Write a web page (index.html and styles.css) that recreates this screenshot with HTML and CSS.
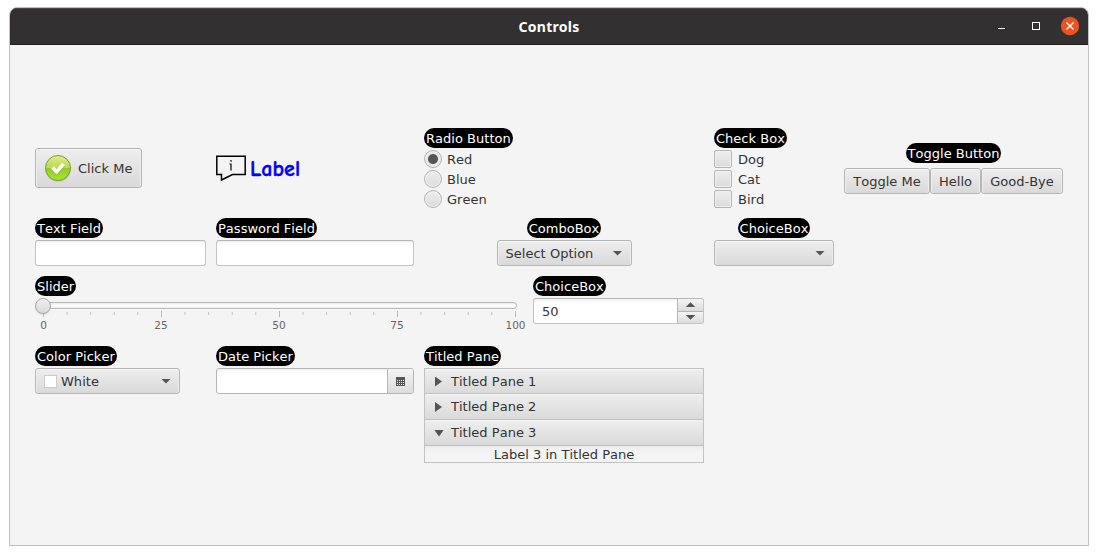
FILE: index.html
```html
<!DOCTYPE html>
<html lang="en">
<head>
<meta charset="utf-8">
<title>Controls</title>
<link rel="stylesheet" href="styles.css">
</head>
<body>
<div class="window">
  <header class="titlebar">
    <h1 class="title">Controls</h1>
    <svg class="window-buttons" width="84" height="20" viewBox="0 0 84 20">
      <path d="M-2 11.500h7" stroke="#fff"/>
      <rect x="32.500" y="5.500" width="7" height="7" fill="none" stroke="#fff"/>
      <circle cx="70" cy="9" r="9.200" fill="#e95420"/>
      <path d="M66.500 5.500l7 7M73.500 5.500l-7 7" stroke="#fff" stroke-width="1.400"/>
    </svg>
  </header>
  <main class="grid">
    <div class="cell middle">
      <button class="btn icon-btn">
        <svg width="28" height="28" viewBox="0 0 28 28">
          <defs>
            <linearGradient id="green" x1="0" y1="0" x2="0" y2="1">
              <stop offset="0" stop-color="#e4ec90"/><stop offset=".48" stop-color="#b9dc50"/>
              <stop offset=".52" stop-color="#97c92f"/><stop offset="1" stop-color="#a6e82c"/>
            </linearGradient>
          </defs>
          <ellipse cx="14" cy="15.500" rx="12.500" ry="12.300" fill="#000" opacity=".13"/>
          <circle cx="14" cy="14" r="12.500" fill="url(#green)" stroke="#76a02c"/>
          <path d="M8.500 13.500l4 4.200 7-7.700" fill="none" stroke="#5f8c1d" stroke-width="3.800" opacity=".35" transform="translate(0 1)"/>
          <path d="M8.500 13.500l4 4.200 7-7.700" fill="none" stroke="#fff" stroke-width="3.700"/>
        </svg>
        <span>Click Me</span>
      </button>
    </div>
    <div class="cell middle">
      <div class="info-label">
        <svg width="31" height="27" viewBox="0 0 31 27" fill="none" stroke="#000">
          <path d="M.8 1.200H29.200V19.500H16.500L5.500 25V19.500H.8Z" stroke-width="1.500"/>
          <path d="M13.500 9h1.500V15.500M15 5v1.800" stroke-width="1.200"/>
        </svg>
        <span class="comic">Label</span>
      </div>
    </div>
    <div class="cell">
      <span class="tag">Radio Button</span>
      <label class="option"><i class="radio selected"></i><span>Red</span></label>
      <label class="option"><i class="radio"></i><span>Blue</span></label>
      <label class="option"><i class="radio"></i><span>Green</span></label>
    </div>
    <div class="cell">
      <span class="tag">Check Box</span>
      <label class="option"><i class="check"></i><span>Dog</span></label>
      <label class="option"><i class="check"></i><span>Cat</span></label>
      <label class="option"><i class="check"></i><span>Bird</span></label>
    </div>
    <div class="cell middle center toggle-cell">
      <span class="tag">Toggle Button</span>
      <div class="toggles">
        <button class="btn toggle-me">Toggle Me</button><button class="btn hello">Hello</button><button class="btn good-bye">Good-Bye</button>
      </div>
    </div>

    <div class="cell"><span class="tag">Text Field</span><div class="field"></div></div>
    <div class="cell"><span class="tag">Password Field</span><div class="field"></div></div>
    <div class="cell center">
      <span class="tag">ComboBox</span>
      <div class="btn dropdown combo"><span>Select Option</span><i class="down"></i></div>
    </div>
    <div class="cell center">
      <span class="tag">ChoiceBox</span>
      <div class="btn dropdown choice"><span></span><i class="down"></i></div>
    </div>

    <div class="cell slider-row">
      <div class="cell">
        <span class="tag">Slider</span>
        <svg class="slider" width="488" height="38" viewBox="0 0 488 38">
          <defs>
            <linearGradient id="track" x1="0" y1="0" x2="0" y2="1"><stop offset="0" stop-color="#e6e6e6"/><stop offset=".5" stop-color="#fff"/><stop offset="1" stop-color="#eee"/></linearGradient>
            <linearGradient id="thumb" x1="0" y1="0" x2="0" y2="1"><stop offset="0" stop-color="#efefef"/><stop offset="1" stop-color="#d9d9d9"/></linearGradient>
          </defs>
          <rect x="1.500" y="4.500" width="480" height="6" rx="3" fill="url(#track)" stroke="#b7b7b7"/>
          <path d="M4 11.500h476" stroke="#fff" opacity=".7"/>
          <path d="M8.500 13v6M126.500 13v6M244.500 13v6M362.500 13v6M480.500 13v6" stroke="#b8b8b8"/>
          <path d="M32 14v3M55.600 14v3M79.200 14v3M102.800 14v3M150 14v3M173.600 14v3M197.200 14v3M220.800 14v3M268 14v3M291.600 14v3M315.200 14v3M338.800 14v3M386 14v3M409.600 14v3M433.200 14v3M456.800 14v3" stroke="#c4c4c4"/>
          <circle cx="8" cy="9" r="8" fill="#000" opacity=".08"/>
          <circle cx="8" cy="8" r="7.500" fill="url(#thumb)" stroke="#a9a9a9"/>
          <g class="tick-text"><text x="8.500" y="31">0</text><text x="126" y="31">25</text><text x="244" y="31">50</text><text x="362" y="31">75</text><text x="480.500" y="31">100</text></g>
        </svg>
      </div>
      <div class="cell">
        <span class="tag">ChoiceBox</span>
        <div class="field spinner">
          <span class="value">50</span>
          <span class="arrows"><span class="arrow"><i class="up"></i></span><span class="arrow"><i class="down"></i></span></span>
        </div>
      </div>
    </div>

    <div class="cell first-column">
      <span class="tag">Color Picker</span>
      <div class="btn dropdown color"><i class="swatch"></i><span>White</span><i class="down"></i></div>
    </div>
    <div class="cell">
      <span class="tag">Date Picker</span>
      <div class="field date">
        <span class="calendar">
          <svg width="9" height="9" viewBox="0 0 9 9"><path d="M0 0h9v9H0z" fill="#555"/><path d="M1 3.500h7M1 5.500h7M1 7.500h7" stroke="#e8e8e8" stroke-dasharray="1 1"/></svg>
        </span>
      </div>
    </div>
    <div class="cell">
      <span class="tag">Titled Pane</span>
      <div class="accordion">
        <div class="pane"><i class="right"></i>Titled Pane 1</div>
        <div class="pane"><i class="right"></i>Titled Pane 2</div>
        <div class="pane"><i class="down wide"></i>Titled Pane 3</div>
        <div class="pane-content">Label 3 in Titled Pane</div>
      </div>
    </div>
  </main>
</div>
</body>
</html>
```
FILE: styles.css
```css
* { box-sizing: border-box; }
body {
  margin: 0;
  padding: 7px 9px 9px;
  height: 555px;
  background: #fff;
  color: #333;
  font: 13px/16px "DejaVu Sans", sans-serif;
  font-kerning: none;
  letter-spacing: .02px;
}
i { display: block; flex: none; }
svg { display: block; flex: none; overflow: visible; }
.window {
  height: 539px;
  border: 1px solid #c0c0c0;
  border-radius: 8px 8px 0 0;
  background: #f4f4f4;
  overflow: hidden;
}
.titlebar {
  display: grid;
  grid-template-columns: 84px 1fr 84px;
  align-items: center;
  height: 37px;
  padding-right: 7px;
  padding-left: 7px;
  background: #333031;
  border-top: 1px solid #4a4748;
  border-bottom: 1px solid #202020;
}
.title {
  grid-column: 2;
  margin: 0;
  color: #fff;
  font: bold 14px/18px "Noto Sans", sans-serif;
  letter-spacing: .25px;
  text-align: center;
}
.window-buttons { margin-left: 3px; }
.grid {
  display: grid;
  grid-template-columns: 171px 198px 280px 120px 219px;
  grid-template-rows: 80px 48px 60px 117px;
  gap: 10px;
  padding: 83px 0 0 25px;
}
.cell { display: flex; flex-direction: column; align-items: flex-start; gap: 2px; }
.middle { justify-content: center; }
.center { align-items: center; }
.tag {
  height: 20px;
  padding: 0 2px;
  border-radius: 10px;
  background: #000;
  color: #fff;
  line-height: 21px;
  white-space: nowrap;
}
.btn {
  display: flex;
  align-items: center;
  height: 26px;
  padding: 0 8px;
  border: 1px solid #b5b5b5;
  border-radius: 3px;
  background: linear-gradient(#eee, #d9d9d9);
  box-shadow: inset 0 1px #f8f8f8, inset 1px 0 #eee, inset -1px 0 #eee;
  color: #333;
  font: inherit;
  font-kerning: none;
  letter-spacing: .02px;
  white-space: nowrap;
}
.btn span, .option span { padding-top: 1px; line-height: 18px; }
.icon-btn { width: 107px; height: 40px; gap: 6px; padding-right: 0; }
.info-label { display: flex; align-items: center; gap: 3px; }
.comic {
  padding-top: 2px;
  color: #00f;
  font: bold 22px/24px "Comic Sans MS", "Comic Neue", Lato, sans-serif;
  -webkit-text-stroke: .4px #00f;
}
.option { display: flex; align-items: center; height: 18px; gap: 5px; }
.radio, .check {
  width: 18px;
  height: 18px;
  border: 1px solid #b5b5b5;
  background: linear-gradient(#eee, #dbdbdb);
  box-shadow: inset 0 0 0 1px #f0f0f0;
}
.radio { border-radius: 50%; }
.selected { background: radial-gradient(circle, #555 4.5px, #e9e9e9 5.5px); }
.check { border-radius: 2px; margin-right: 1px; }
.toggle-cell { gap: 5px; }
.toggles { display: flex; }
.toggle-me { width: 86px; }
.hello { width: 51px; }
.good-bye { width: 82px; }
.toggles .btn { justify-content: center; padding: 2px 0 0; }
.field {
  width: 100%;
  height: 26px;
  border: 1px solid #c3c3c3;
  border-top-color: #b5b5b5;
  border-radius: 3px;
  background: linear-gradient(#f2f2f2, #fff 5px);
}
.dropdown { justify-content: space-between; }
.combo { width: 135px; }
.choice { width: 120px; }
.color { width: 145px; }
.swatch { width: 13px; height: 13px; margin-right: 4px; border: 1px solid #ccc; background: #fff; }
.color span { flex: 1; }
.down { width: 10px; height: 5px; background: #555; clip-path: polygon(0 0, 100% 0, 50% 100%); }
.up { width: 10px; height: 5px; background: #555; clip-path: polygon(0 100%, 100% 100%, 50% 0); }
.right { width: 7px; height: 10px; margin: 0 3px 0 1px; background: #555; clip-path: polygon(0 0, 100% 50%, 0 100%); }
.slider-row { grid-column: 1 / 4; flex-direction: row; gap: 10px; }
.slider-row .cell:first-child { width: 488px; }
.slider-row .cell:last-child { width: 171px; }
.first-column { grid-column: 1; }
.tick-text { fill: #666; font-size: 10.5px; text-anchor: middle; }
.spinner { display: flex; align-items: stretch; overflow: hidden; }
.value { flex: 1; padding: 5px 8px 3px; }
.arrows { display: flex; flex-direction: column; width: 26px; border-left: 1px solid #b5b5b5; }
.arrow {
  display: flex;
  flex: 1;
  align-items: center;
  justify-content: center;
  background: linear-gradient(#f4f4f4, #dcdcdc);
}
.arrow:first-child { border-bottom: 1px solid #b5b5b5; }
.date { display: flex; justify-content: flex-end; border-color: #b5b5b5; overflow: hidden; }
.calendar {
  display: flex;
  align-items: center;
  justify-content: center;
  width: 26px;
  border-left: 1px solid #b5b5b5;
  background: linear-gradient(#f4f4f4, #dcdcdc);
}
.accordion { width: 280px; border: 1px solid #c2c2c2; }
.pane {
  display: flex;
  align-items: center;
  gap: 6px;
  height: 26px;
  padding: 1px 0 0 9px;
  border-bottom: 1px solid #c0c0c0;
  background: linear-gradient(#eee, #dadada);
  box-shadow: inset 0 1px #f6f6f6;
}
.pane:first-child { height: 25px; }
.pane .wide { width: 10px; height: 7px; margin-right: 1px; }
.pane-content {
  height: 16px;
  background: linear-gradient(#ececec, #f4f4f4 6px);
  line-height: 17px;
  text-align: center;
}
```
